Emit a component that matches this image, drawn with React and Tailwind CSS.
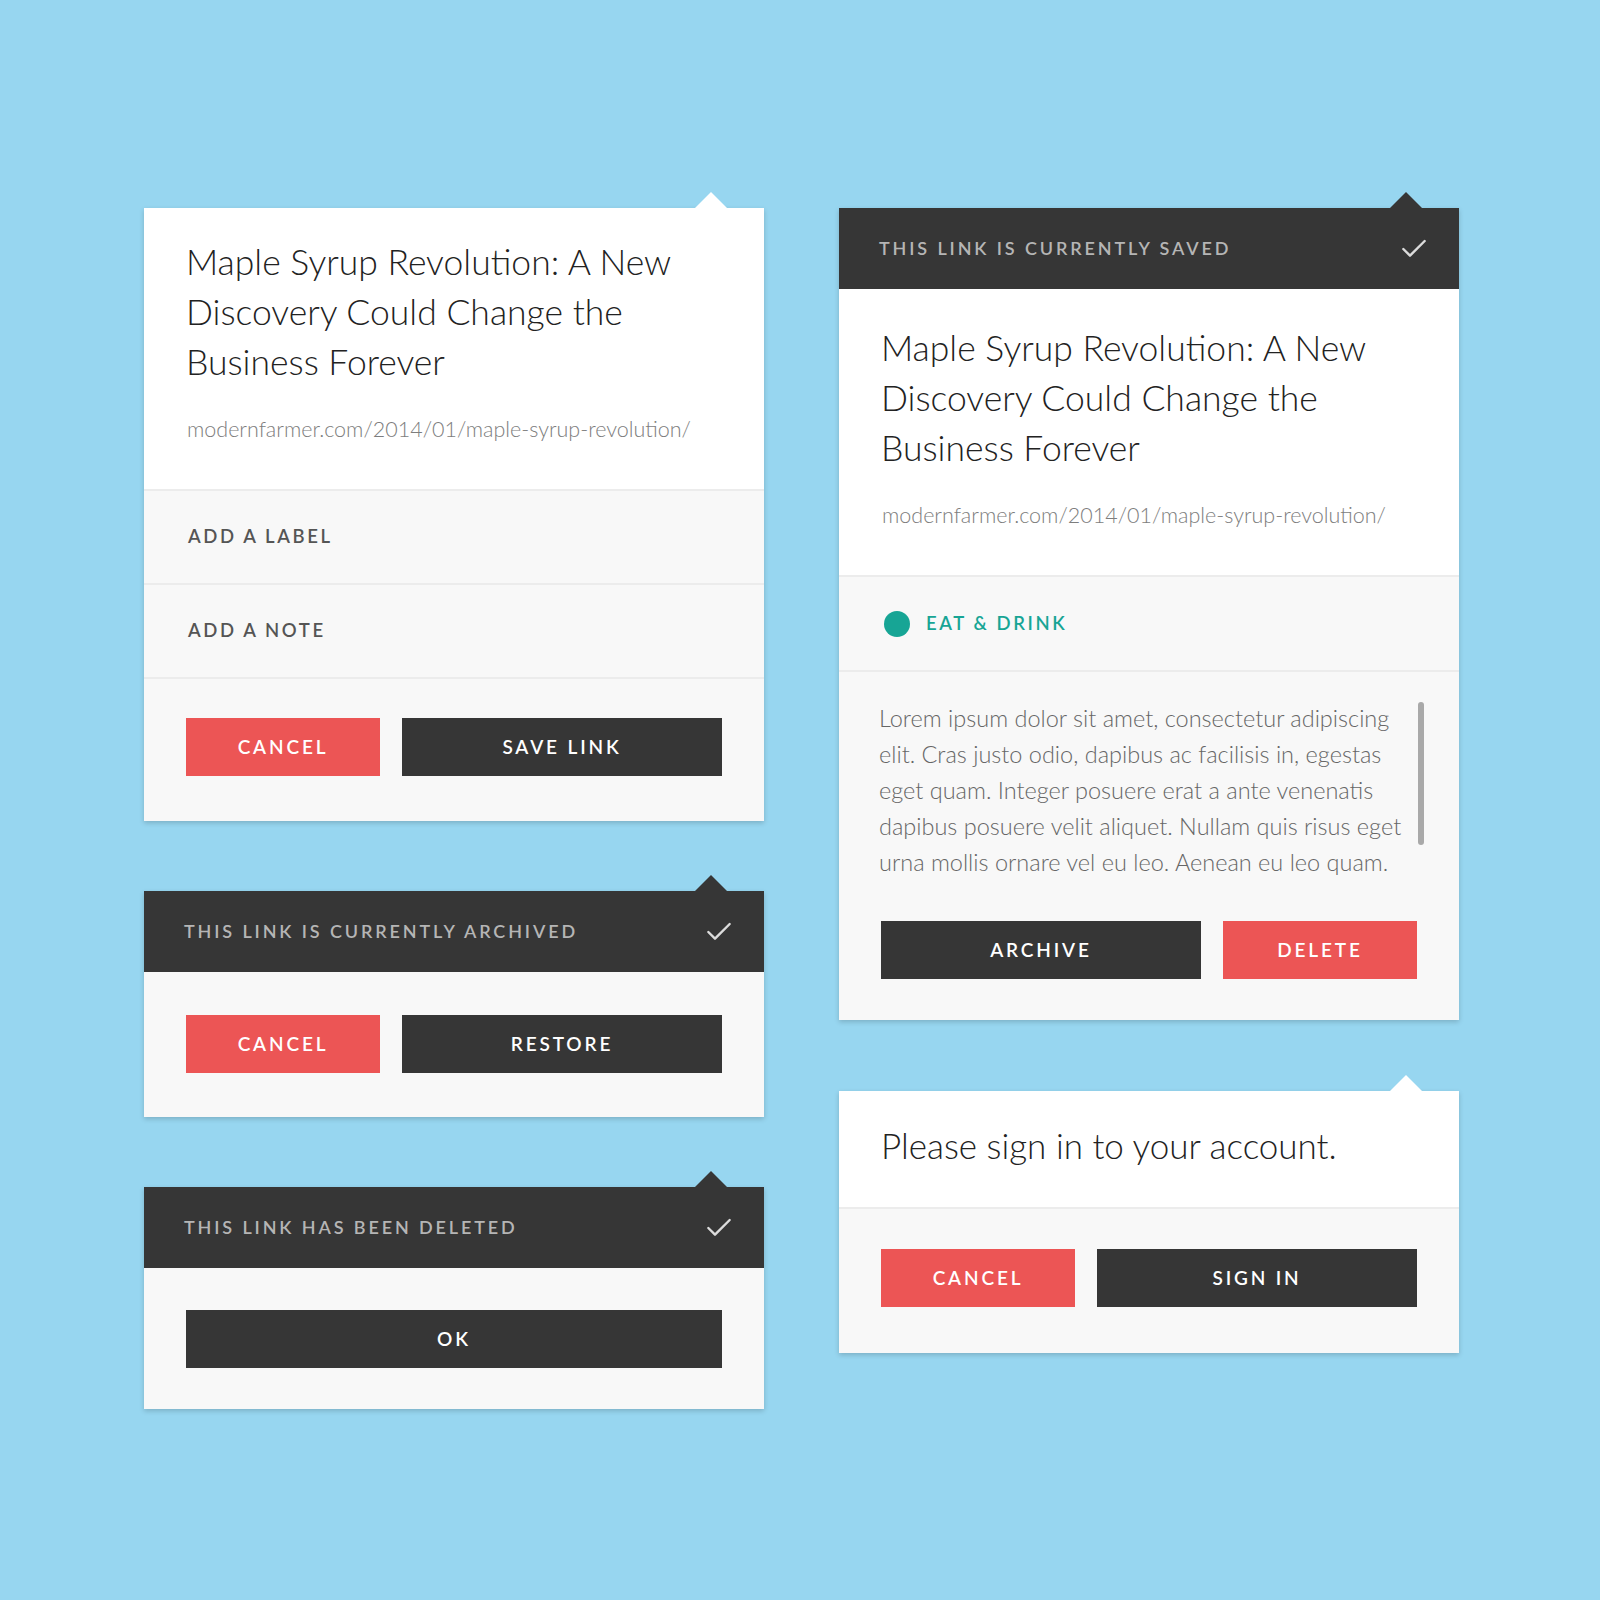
import { Check } from "lucide-react";

const caps = "font-['Lato','Liberation_Sans',sans-serif] font-semibold uppercase";
const light = "font-['Lato','Liberation_Sans',sans-serif] font-light";

function Pointer({ dark }) {
  return (
    <div
      className={
        "absolute -top-[16px] right-[37px] h-0 w-0 border-l-[16px] border-r-[16px] border-b-[16px] border-l-transparent border-r-transparent " +
        (dark ? "border-b-[#363636]" : "border-b-white")
      }
    />
  );
}

function Button({ red, className = "", children }) {
  return (
    <button
      className={
        "flex h-[58px] items-center justify-center text-[19px] tracking-[0.15em] text-white " +
        caps +
        " " +
        (red ? "bg-[#ec5555] " : "bg-[#363636] ") +
        className
      }
    >
      {children}
    </button>
  );
}

function Header({ children }) {
  return (
    <div className="flex h-[81px] items-center justify-between bg-[#363636] pl-[40px] pr-[29px]">
      <span className={"text-[18px] tracking-[0.16em] text-[#b5b5b5] " + caps}>{children}</span>
      <Check className="h-[32px] w-[32px] text-[#dcdcdc]" strokeWidth={1.8} />
    </div>
  );
}

function Card({ pointerDark, children }) {
  return (
    <div className="relative w-[620px] bg-[#f8f8f8] shadow-[0_2px_5px_rgba(0,0,0,0.18)]">
      <Pointer dark={pointerDark} />
      {children}
    </div>
  );
}

function Article({ top }) {
  return (
    <div className={"bg-white pl-[42px] pr-[30px] pb-[46px] " + top}>
      <h2 className={"text-[35.5px] leading-[50px] text-[#222] " + light}>
        Maple Syrup Revolution: A New
        <br />
        Discovery Could Change the
        <br />
        Business Forever
      </h2>
      <p className={"mt-[28px] ml-[1px] text-[21.5px] leading-[28px] text-[#7d7d7d] " + light}>
        modernfarmer.com/2014/01/maple-syrup-revolution/
      </p>
    </div>
  );
}

export default function App() {
  return (
    <div className="min-h-[1600px] w-[1600px] bg-[#97d6f0]">
      <div className="flex gap-[75px] pl-[144px] pt-[208px]">
        {/* left column */}
        <div className="flex flex-col gap-[70px]">
          <Card>
            <Article top="pt-[29px]" />
            <div className="flex h-[94px] items-center border-t-2 border-[#ececec] pl-[44px]">
              <span className={"text-[18.5px] tracking-[0.14em] text-[#555] " + caps}>Add a label</span>
            </div>
            <div className="flex h-[94px] items-center border-t-2 border-[#ececec] pl-[44px]">
              <span className={"text-[18.5px] tracking-[0.14em] text-[#555] " + caps}>Add a note</span>
            </div>
            <div className="flex gap-[22px] border-t-2 border-[#ececec] px-[42px] pt-[39px] pb-[45px]">
              <Button red className="w-[194px]">Cancel</Button>
              <Button className="flex-1">Save link</Button>
            </div>
          </Card>

          <Card pointerDark>
            <Header>This link is currently archived</Header>
            <div className="flex gap-[22px] px-[42px] pt-[43px] pb-[44px]">
              <Button red className="w-[194px]">Cancel</Button>
              <Button className="flex-1">Restore</Button>
            </div>
          </Card>

          <Card pointerDark>
            <Header>This link has been deleted</Header>
            <div className="px-[42px] pt-[42px] pb-[41px]">
              <Button className="w-full">OK</Button>
            </div>
          </Card>
        </div>

        {/* right column */}
        <div className="flex flex-col gap-[71px]">
          <Card pointerDark>
            <Header>This link is currently saved</Header>
            <Article top="pt-[34px]" />
            <div className="flex h-[95px] items-center gap-[16px] border-t-2 border-[#ececec] pl-[45px]">
              <span className="h-[26px] w-[26px] rounded-full bg-[#17a595]" />
              <span className={"text-[18.5px] tracking-[0.14em] text-[#17a595] " + caps}>Eat &amp; Drink</span>
            </div>
            <div className="border-t-2 border-[#ececec] pl-[40px] pr-[35px] pt-[28px] pb-[41px]">
              <div className="flex gap-[10px]">
                <p className={"flex-1 whitespace-nowrap text-[23.5px] leading-[36px] text-[#666] " + light}>
                  Lorem ipsum dolor sit amet, consectetur adipiscing
                  <br />
                  elit. Cras justo odio, dapibus ac facilisis in, egestas
                  <br />
                  eget quam. Integer posuere erat a ante venenatis
                  <br />
                  dapibus posuere velit aliquet. Nullam quis risus eget
                  <br />
                  urna mollis ornare vel eu leo. Aenean eu leo quam.
                </p>
                <div className="mt-[2px] h-[143px] w-[6px] rounded-full bg-[#a9a9a9]" />
              </div>
              <div className="mt-[41px] ml-[2px] flex gap-[22px] pr-[7px]">
                <Button className="w-[320px]">Archive</Button>
                <Button red className="flex-1">Delete</Button>
              </div>
            </div>
          </Card>

          <Card>
            <div className="bg-white pl-[42px] pt-[32px] pb-[40px]">
              <p className={"text-[35px] leading-[44px] text-[#222] " + light}>Please sign in to your account.</p>
            </div>
            <div className="flex gap-[22px] border-t-2 border-[#ececec] px-[42px] pt-[40px] pb-[46px]">
              <Button red className="w-[194px]">Cancel</Button>
              <Button className="flex-1">Sign in</Button>
            </div>
          </Card>
        </div>
      </div>
    </div>
  );
}
